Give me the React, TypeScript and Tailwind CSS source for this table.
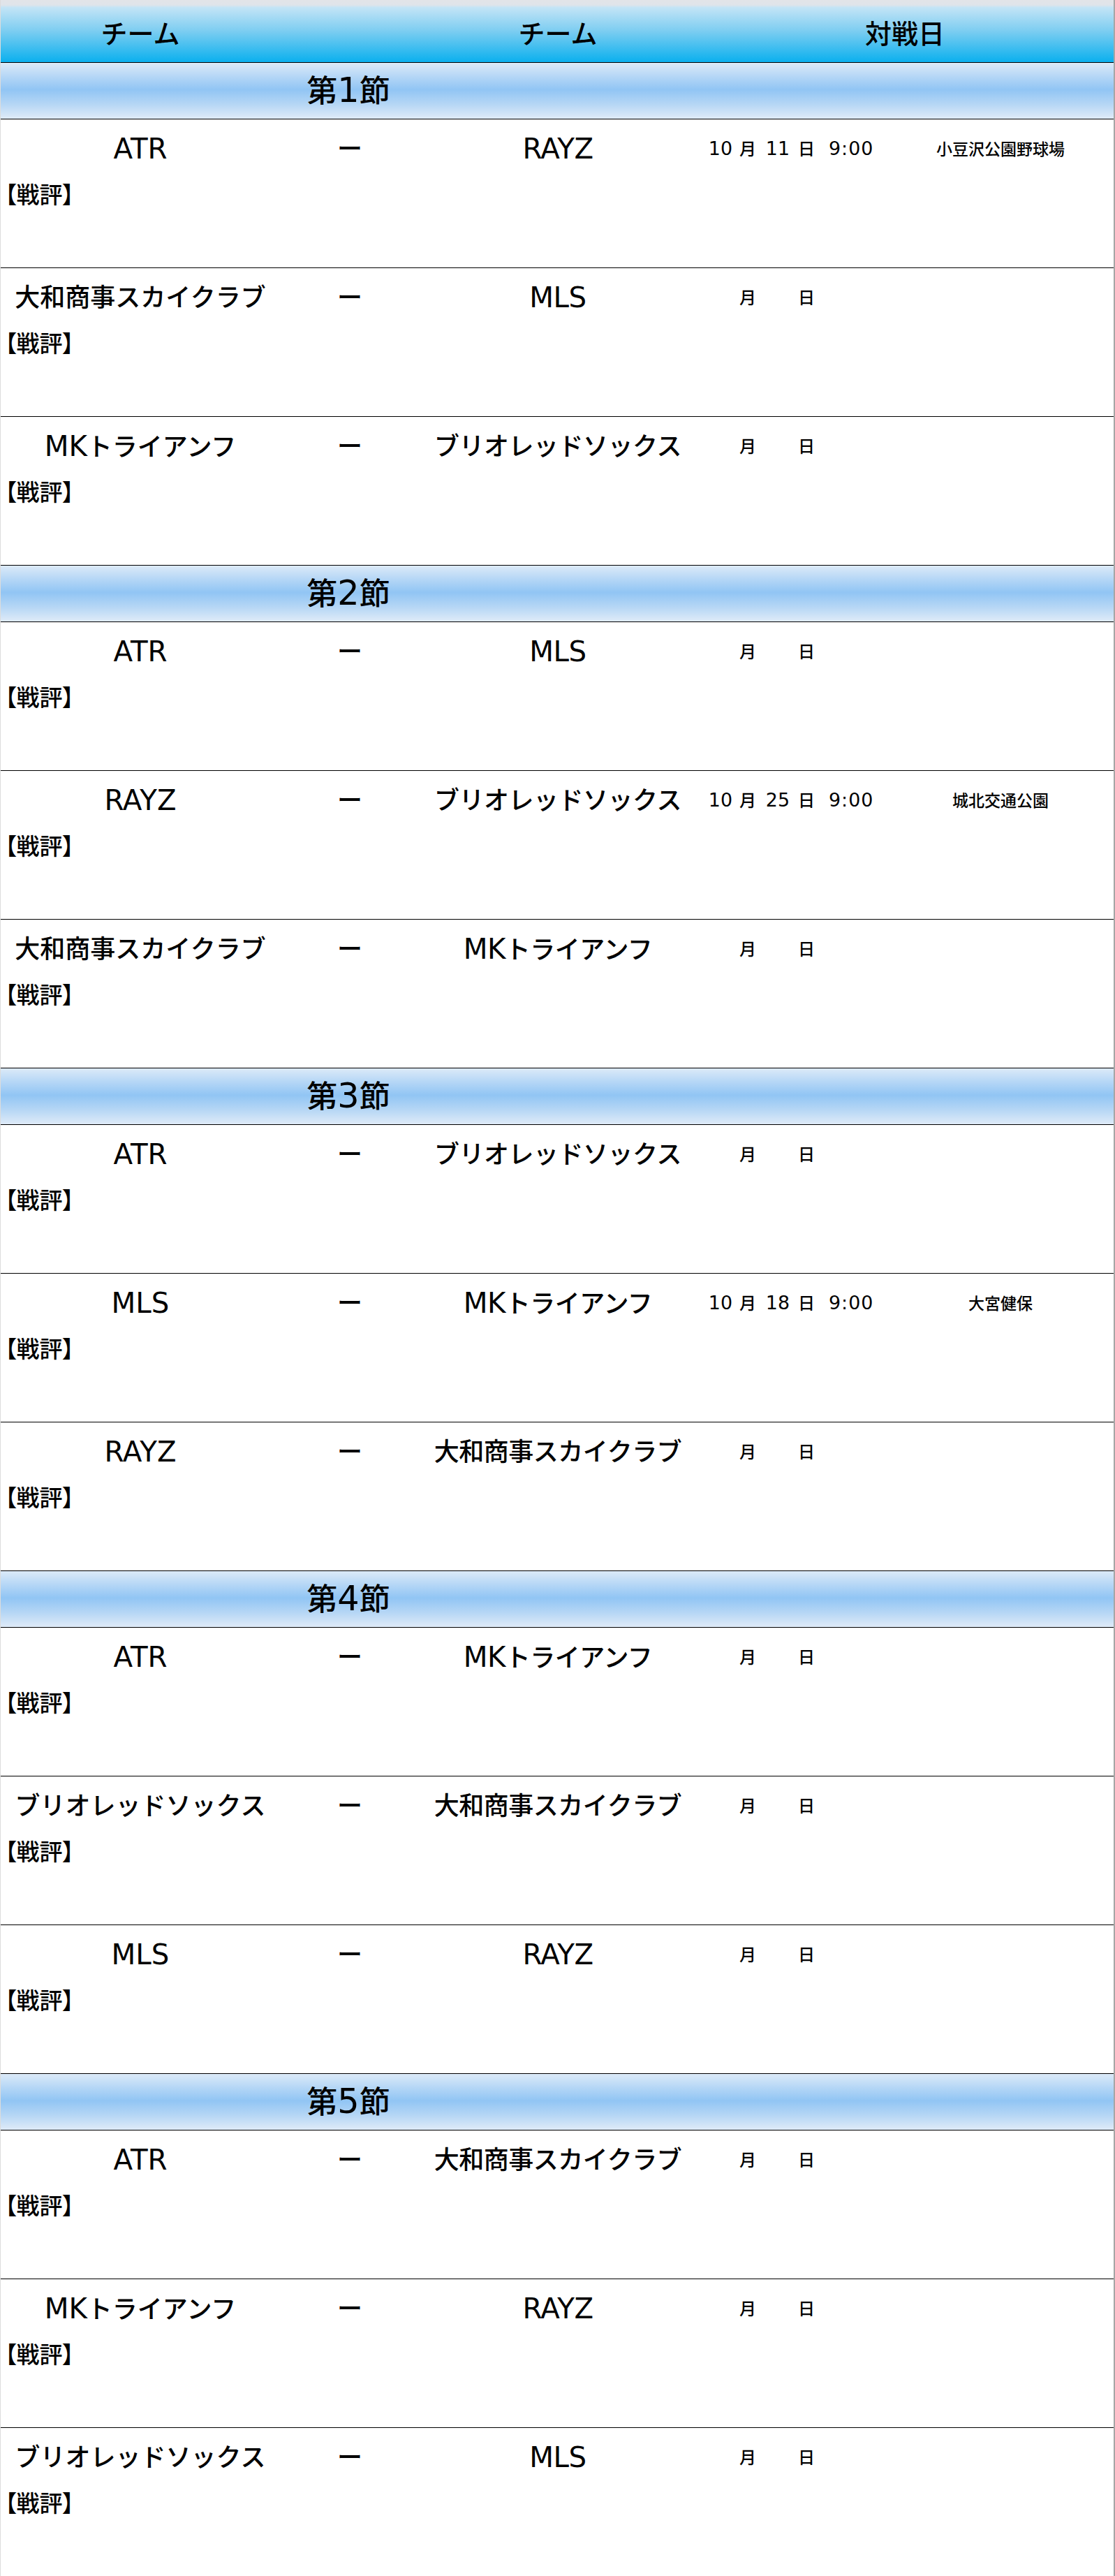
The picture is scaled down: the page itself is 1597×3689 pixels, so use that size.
const schedule = [
  {
    title: "第1節",
    matches: [
      { home: "ATR", away: "RAYZ", month: "10", day: "11", time: "9:00", venue: "小豆沢公園野球場" },
      { home: "大和商事スカイクラブ", away: "MLS" },
      { home: "MKトライアンフ", away: "ブリオレッドソックス" },
    ],
  },
  {
    title: "第2節",
    matches: [
      { home: "ATR", away: "MLS" },
      { home: "RAYZ", away: "ブリオレッドソックス", month: "10", day: "25", time: "9:00", venue: "城北交通公園" },
      { home: "大和商事スカイクラブ", away: "MKトライアンフ" },
    ],
  },
  {
    title: "第3節",
    matches: [
      { home: "ATR", away: "ブリオレッドソックス" },
      { home: "MLS", away: "MKトライアンフ", month: "10", day: "18", time: "9:00", venue: "大宮健保" },
      { home: "RAYZ", away: "大和商事スカイクラブ" },
    ],
  },
  {
    title: "第4節",
    matches: [
      { home: "ATR", away: "MKトライアンフ" },
      { home: "ブリオレッドソックス", away: "大和商事スカイクラブ" },
      { home: "MLS", away: "RAYZ" },
    ],
  },
  {
    title: "第5節",
    matches: [
      { home: "ATR", away: "大和商事スカイクラブ" },
      { home: "MKトライアンフ", away: "RAYZ" },
      { home: "ブリオレッドソックス", away: "MLS" },
    ],
  },
];

type Match = { home: string; away: string; month?: string; day?: string; time?: string; venue?: string };

// Latin runs render a bit larger, like the Meiryo look of the original
function Mixed({ text }: { text: string }) {
  const parts = text.split(/([A-Za-z0-9:]+)/);
  return (
    <>
      {parts.map((p, i) =>
        /^[A-Za-z0-9:]+$/.test(p) ? (
          <span key={i} className="text-[1.12em] leading-none">{p}</span>
        ) : (
          <span key={i}>{p}</span>
        )
      )}
    </>
  );
}

const cols = "grid grid-cols-[400px_200px_396px_274px_1fr]";

function MatchRow({ m }: { m: Match }) {
  return (
    <div className="h-[213px] border-b border-black bg-white">
      <div className={`${cols} h-[86px] items-center`}>
        <div className="text-center text-[36px] leading-[40px] text-black"><Mixed text={m.home} /></div>
        <div className="text-center text-[36px] leading-[40px] text-black">ー</div>
        <div className="text-center text-[36px] leading-[40px] tracking-[-0.5px] text-black"><Mixed text={m.away} /></div>
        <div className="flex items-center text-[24px] leading-[30px] text-black">
          <span className="w-[52px] text-right">{m.month ? <Mixed text={m.month} /> : ""}</span>
          <span className="ml-[10px]">月</span>
          <span className="w-[48px] text-right">{m.day ? <Mixed text={m.day} /> : ""}</span>
          <span className="ml-[12px]">日</span>
          {m.time && <span className="ml-[20px] tracking-[1px]"><Mixed text={m.time} /></span>}
        </div>
        <div className="text-center text-[23px] leading-[30px] text-black">{m.venue ?? ""}</div>
      </div>
      <div className="h-[46px] flex items-center pl-[6px] text-[33px] leading-[40px] text-black [font-feature-settings:'palt']">
        【戦評】
      </div>
    </div>
  );
}

export default function App() {
  return (
    <div className="w-full bg-white font-medium font-['DejaVu_Sans','Noto_Sans_CJK_JP',sans-serif] border-l border-[#dcdcdc] border-r-2 border-r-[#a6a6a6]">
      {/* Header */}
      <div className={`${cols} h-[90px] items-center pt-[8px] border-b border-black bg-[linear-gradient(to_bottom,#e2e4e8_0%,#dfe4ea_8%,#c3e4f6_12%,#7ccdf1_50%,#0bb0ee_100%)]`}>
        <div className="text-center text-[38px] leading-[44px] text-black">チーム</div>
        <div />
        <div className="text-center text-[38px] leading-[44px] text-black">チーム</div>
        <div className="col-span-2 text-center text-[38px] leading-[44px] text-black">対戦日</div>
      </div>

      {schedule.map((s) => (
        <div key={s.title}>
          <div className={`${cols} h-[81px] items-center border-b border-black bg-[linear-gradient(to_bottom,#dceaf8_0%,#b4d6f6_25%,#91c5f4_48%,#b7d7f5_75%,#dfebf8_100%)]`}>
            <div className="col-span-3 text-center text-[44px] leading-[50px] text-black">
              <Mixed text={s.title} />
            </div>
          </div>
          {s.matches.map((m, i) => (
            <MatchRow key={i} m={m} />
          ))}
        </div>
      ))}
    </div>
  );
}
